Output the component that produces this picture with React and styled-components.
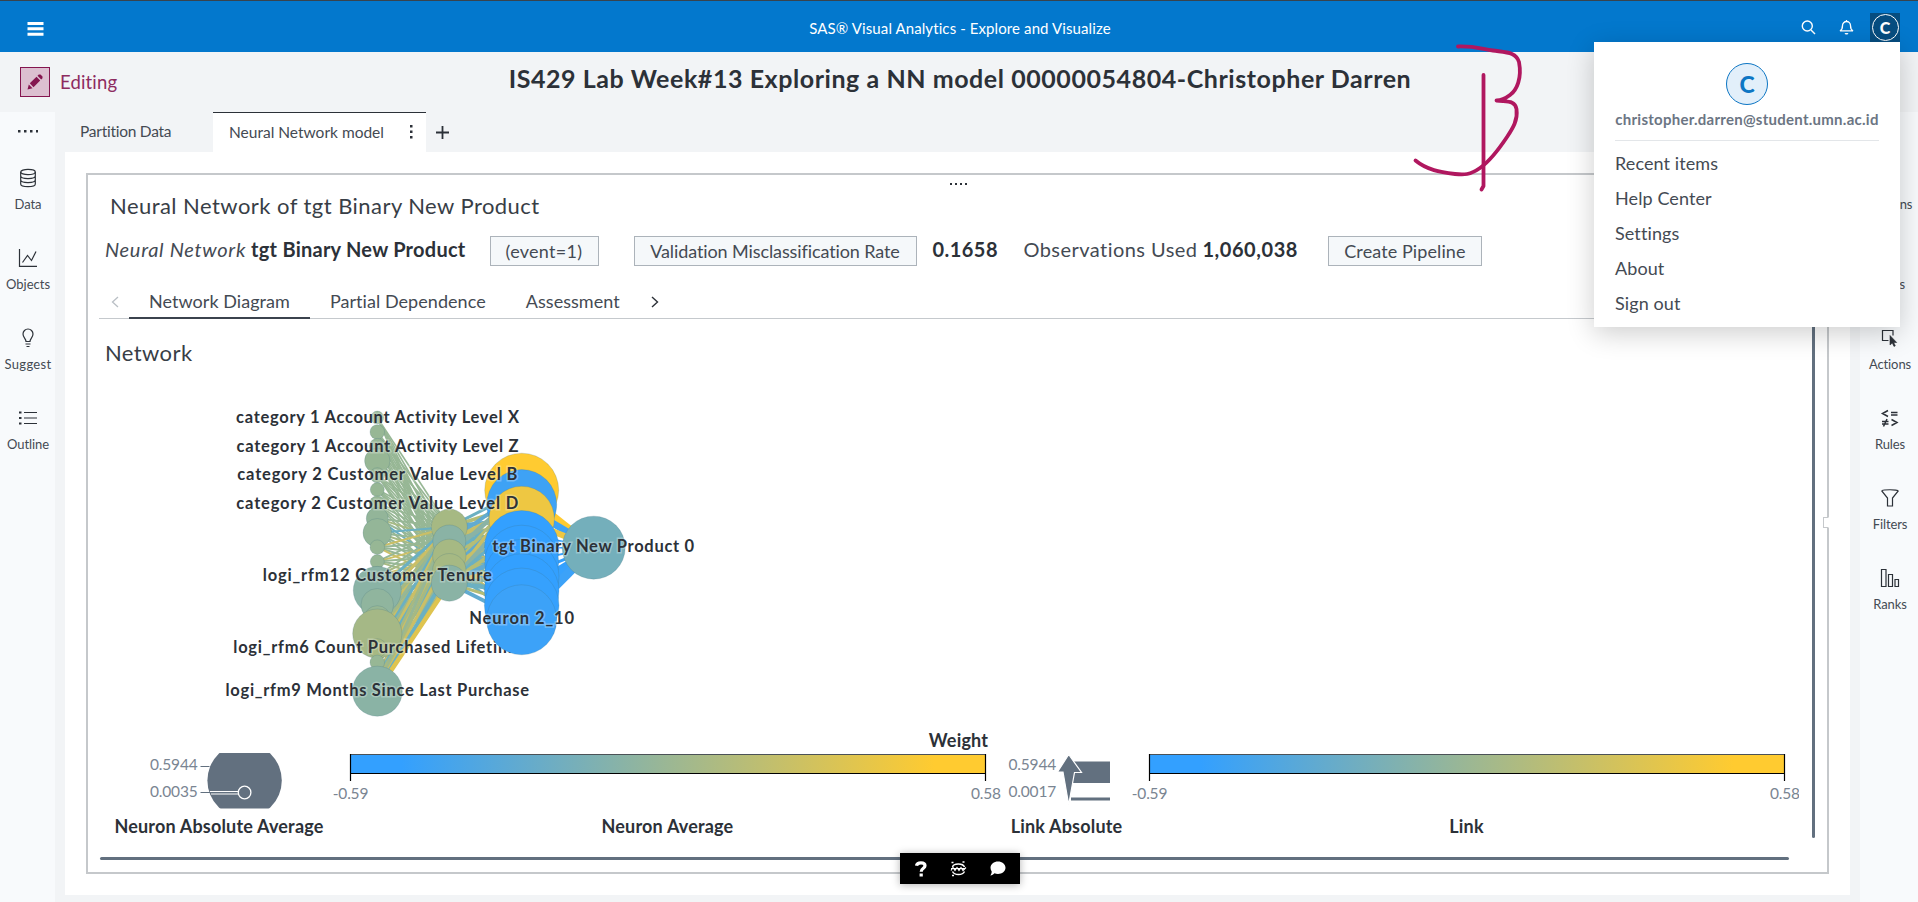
import React from "react";
import styled, { createGlobalStyle } from "styled-components";

const INK = "#2c3138";
const TEXT = "#444a53";
const SLATE = "#62707f";

const GlobalStyle = createGlobalStyle`
  * { box-sizing: border-box; }
  body {
    margin: 0;
    overflow: hidden;
    font-family: Lato, "Open Sans", sans-serif;
    font-variant-ligatures: none;
    color: ${TEXT};
    background: #f2f4f6;
  }
  svg { display: block; }
`;

const Page = styled.div`
  position: relative;
  width: 1918px;
  height: 902px;
  display: flex;
  flex-direction: column;
  overflow: hidden;
  white-space: nowrap;
`;

/* Application bar */
const AppBar = styled.header`
  flex: none;
  height: 52px;
  display: grid;
  grid-template-columns: 1fr auto 1fr;
  align-items: center;
  padding: 4px 18px 0 27px;
  border-top: 1px solid #38434d;
  background: #0378cd;
  color: #fff;
`;
const AppTitle = styled.span`
  margin-right: 7px;
  padding-bottom: 1px;
  font-size: 15px;
  letter-spacing: 0.1px;
`;
const AppActions = styled.div`
  display: flex;
  align-items: center;
  justify-content: flex-end;
`;
const BarIcon = styled.span`
  margin-right: ${(p) => p.$gap}px;
  padding-bottom: 2px;
`;
const AvatarButton = styled.div`
  width: 30px;
  height: 30px;
  padding: 1.5px;
  margin: -2px 0 0 0;
  background: #064d80;
`;
const Avatar = styled.div`
  display: flex;
  align-items: center;
  justify-content: center;
  width: ${(p) => p.$size}px;
  height: ${(p) => p.$size}px;
  border-radius: 50%;
  border: 1.5px solid ${(p) => p.$color};
  background: ${(p) => p.$fill};
  color: ${(p) => p.$color};
  font-weight: 900;
  font-size: ${(p) => p.$font}px;
  line-height: 1;
`;

/* Report header */
const ReportBar = styled.div`
  flex: none;
  height: 60px;
  display: grid;
  grid-template-columns: 1fr auto 1fr;
  padding: 0 18px 0 20px;
`;
const EditMode = styled.div`
  display: flex;
  align-items: center;
  gap: 10px;
  color: #8d2b60;
  font-size: 18.5px;
  letter-spacing: 0.15px;
`;
const EditButton = styled.span`
  display: flex;
  align-items: center;
  justify-content: center;
  width: 30px;
  height: 30px;
  border: 1px solid #84154f;
  background: #dcbfd0;
`;
const ReportTitle = styled.h1`
  margin: 0;
  color: ${INK};
  font-size: 25px;
  font-weight: 700;
  letter-spacing: 0.56px;
  line-height: 53px;
`;

/* Body columns */
const Body = styled.div`
  flex: 1;
  min-height: 0;
  display: flex;
`;
const Rail = styled.nav`
  flex: none;
  width: ${(p) => p.$width}px;
  padding-left: ${(p) => p.$inset || 0}px;
  display: flex;
  flex-direction: column;
  align-items: center;
  background: #f8fafc;
`;
const RailHandle = styled.div`
  height: 42px;
  padding-top: 18px;
`;
const RailItem = styled.div`
  height: 80px;
  display: flex;
  flex-direction: column;
  align-items: center;
  padding-top: 14px;
  font-size: 13px;
  letter-spacing: ${(p) => p.$ls ?? -0.1}px;
  line-height: 16px;
  svg { margin-bottom: 8px; }
`;
const Workspace = styled.main`
  flex: 1;
  min-width: 0;
  display: flex;
  flex-direction: column;
  padding: 0 10px 7px;
`;
const PageTabs = styled.div`
  height: 40px;
  display: flex;
  align-items: center;
  font-size: 15.5px;
`;
const PageTab = styled.span`
  width: 148px;
  padding: 0 0 2px 15px;
  letter-spacing: -0.25px;
`;
const ActivePageTab = styled.span`
  align-self: stretch;
  width: 213px;
  display: flex;
  align-items: center;
  justify-content: space-between;
  padding: 0 13px 1px 16px;
  border-top: 1px solid ${INK};
  background: #fff;
`;
const AddTab = styled.span`
  margin-left: 10px;
`;
const Canvas = styled.section`
  flex: 1;
  min-height: 0;
  padding: 21px 21px 21px;
  background: #fff;
`;
const Frame = styled.div`
  position: relative;
  height: 701px;
  border: 2px solid #c5c8cb;
  display: flex;
  flex-direction: column;
`;
const FrameNotch = styled.span`
  position: absolute;
  right: -2px;
  top: 342px;
  width: 6px;
  height: 11px;
  border: 1px solid #c5c8cb;
  border-right-color: #fff;
  background: #fff;
`;
const DragRow = styled.div`
  height: 17px;
  padding: 1px 0 0 2px;
  display: flex;
  align-items: center;
  justify-content: center;
`;
const ObjectTitle = styled.h2`
  margin: 0;
  padding-left: 22px;
  color: #383e46;
  font-size: 22px;
  font-weight: 400;
  letter-spacing: 0.45px;
  line-height: 28px;
  height: 29px;
`;
const Summary = styled.div`
  height: 60px;
  display: flex;
  align-items: center;
  padding-left: 17px;
  font-size: 20px;
`;
const Stat = styled.span`
  margin: -5px ${(p) => p.$after}px 0 0;
  letter-spacing: ${(p) => p.$ls}px;
  color: ${(p) => (p.$strong ? INK : TEXT)};
  font-weight: ${(p) => (p.$strong ? 700 : 400)};
  font-style: ${(p) => (p.$italic ? "italic" : "normal")};
`;
const Chip = styled.span`
  width: ${(p) => p.$width}px;
  height: 30px;
  margin-right: ${(p) => p.$after}px;
  border: 1px solid #acb3ba;
  background: #f5f8fa;
  font-size: 18px;
  line-height: 28px;
  text-align: center;
  letter-spacing: ${(p) => p.$ls}px;
`;
const ResultTabs = styled.div`
  height: 38px;
  margin-left: 11px;
  display: flex;
  border-bottom: 1px solid #c5c9cd;
  font-size: 18px;
  letter-spacing: 0.05px;
  line-height: 41px;
`;
const ResultTab = styled.span`
  height: 38px;
  padding: 0 20px;
  border-bottom: 2px solid ${(p) => (p.$active ? "#3b434d" : "transparent")};
`;
const TabArrow = styled.span`
  display: flex;
  align-items: center;
  width: 30px;
  padding: 4px 0 0 ${(p) => p.$inset}px;
`;
const Scroller = styled.div`
  flex: none;
  height: 519px;
  display: flex;
  justify-content: space-between;
`;
const Diagram = styled.div`
  padding-left: 11px;
`;
const DiagramTitle = styled.h3`
  margin: 0;
  height: 61px;
  padding-left: 6px;
  color: #383e46;
  font-size: 22px;
  font-weight: 400;
  letter-spacing: 0.4px;
  line-height: 68px;
`;
const VerticalThumb = styled.div`
  width: 3px;
  height: 519px;
  margin-right: 12px;
  border-radius: 2px;
  background: ${SLATE};
`;
const HorizontalThumb = styled.div`
  width: 1689px;
  height: 3px;
  margin: 19px 0 0 12px;
  border-radius: 2px;
  background: ${SLATE};
`;

/* Floating layers */
const UserMenu = styled.aside`
  position: absolute;
  left: 1594px;
  top: 42px;
  width: 306px;
  height: 285px;
  padding: 21px 21px 0;
  background: #fff;
  box-shadow: 0 6px 26px rgba(0, 0, 0, 0.2);
`;
const Profile = styled.div`
  height: 78px;
  margin-bottom: 5px;
  display: flex;
  flex-direction: column;
  align-items: center;
  gap: 4px;
  border-bottom: 1px solid #e3e6e9;
`;
const Email = styled.span`
  color: #6b7583;
  font-size: 15px;
  font-weight: 700;
  letter-spacing: 0.26px;
  line-height: 20px;
`;
const MenuItem = styled.div`
  height: 35px;
  font-size: 18px;
  letter-spacing: 0.1px;
  line-height: 34px;
`;
const HelpBar = styled.div`
  position: absolute;
  left: 900px;
  top: 853px;
  width: 120px;
  height: 31px;
  display: flex;
  align-items: center;
  justify-content: space-around;
  padding: 0 3px;
  background: #000;
  box-shadow: 0 1px 8px rgba(0, 0, 0, 0.3);
`;
const Ink = styled.svg`
  position: absolute;
  left: 1400px;
  top: 36px;
  pointer-events: none;
`;

function Dots({ size = 2, step = 5 }) {
  const w = step * 3 + size;
  return (
    <svg width={w} height={size} fill={INK}>
      {[0, 1, 2, 3].map((i) => (
        <rect key={i} x={i * step} width={size} height={size} />
      ))}
    </svg>
  );
}

const railIcons = {
  data: (
    <>
      <ellipse cx="10" cy="4" rx="7.3" ry="2.7" />
      <path d="M2.7 4v12c0 3.6 14.6 3.6 14.6 0V4M2.7 8c0 3.4 14.6 3.4 14.6 0M2.7 12c0 3.4 14.6 3.4 14.6 0" />
    </>
  ),
  objects: <path d="M1.5 1v17.3H19M4.5 14.5l5-7 4 5 4.5-9" />,
  suggest: <path d="M8 13.5c0-3-3-4-3-7.5a5 5 0 0 1 10 0c0 3.500-3 4.500-3 7.500zM7.500 16h5M8.500 18.500h3" />,
  outline: (
    <>
      <path d="M6 4.500h13M6 10h13M6 15.500h13" />
      <path d="M1 4.500h2.500M1 10h2.500M1 15.500h2.500" strokeWidth="2.200" />
    </>
  ),
  actions: (
    <>
      <path d="M8.500 12.500H2.500V2.500h10.500v5" />
      <path d="M10 7.500v9.500l2.300-2 1.700 3.500 1.300-.7-1.600-3.300h3z" fill={INK} strokeWidth="0.6" />
    </>
  ),
  rules: <path d="M8 2.500L2.500 5.500 8 8.500M11 4.500h6.500M11 7h6.500M2 13.500h6.500M2 16h6.500M7 11l-3.500 7.500M11.500 11.500l5.500 3-5.500 3" strokeWidth="1.500" />,
  filters: <path d="M1.800 3c0-1.700 16.400-1.700 16.400 0L12.500 10v8h-5v-8z" />,
  ranks: <path d="M1.500 1.500h4.500v17H1.500zM8.500 6.500h4v12h-4zM15 11.500h3.500v7H15z" />,
};

function RailEntry({ icon, label, ls }) {
  return (
    <RailItem $ls={ls}>
      <svg width="20" height="20" viewBox="0 0 20 20" fill="none" stroke={INK} strokeWidth="1.2">
        {railIcons[icon]}
      </svg>
      {label}
    </RailItem>
  );
}

/* Network geometry, in page pixels */
const X1 = 377.3;
const X2 = 449.3;
const X3 = 521.7;
const XO = 593.7;
const STEP = 14.4;
const rowY = (i) => 417.6 + i * STEP;

const SAGE = "#97b795";
const TEAL = "#8ab3a5";
const OLIVE = "#a6b983";
const BLUE = "#33a0ff";

const inputs = [
  [6.5, SAGE], [7.3, SAGE], [8, SAGE], [12.7, SAGE], [7.5, SAGE], [7, SAGE], [8, SAGE],
  [11, "#93b599"], [14.3, "#94b698"], [7.3, SAGE], [7, SAGE], [9.5, SAGE], [24, TEAL],
  [16.3, "#90b59e"], [13.5, SAGE], [24.6, "#a5b886"], [9.3, OLIVE], [7.3, SAGE], [6.5, SAGE], [25, TEAL],
].map(([r, fill], i) => ({ x: X1, y: rowY(i), r, fill }));

const hidden = [
  [7.6, 18, OLIVE], [8.6, 16.5, TEAL], [9.6, 16.7, OLIVE], [10.6, 16.7, OLIVE], [11.5, 18, TEAL],
].map(([i, r, fill]) => ({ x: X2, y: rowY(i), r, fill }));

const deep = [
  [37, "#ffcb31"], [35, "#3ea2f5"], [32.7, "#eec742"], [20, BLUE], [37.3, BLUE],
  [37, BLUE], [37.3, BLUE], [37.3, BLUE], [37.3, "#36a1fd"], [35, "#3ca2f8"],
].map(([r, fill], i) => ({ x: X3, y: rowY(i + 5.04), r, fill }));

const output = { x: XO, y: rowY(9.03), r: 31.5, fill: "#74afbb" };

const warm = "#cbbf66";
const cool = "#6bb0c2";
const firstLinks = inputs.flatMap((a, i) =>
  hidden.map((b, j) => {
    const k = (i * 7 + j * 5) % 9;
    const lively = i > 10 || (i > 6 && k < 4);
    return {
      a,
      b,
      w: i > 11 ? 3.2 : i > 6 ? 2 : 1.7,
      stroke: lively ? [cool, warm, OLIVE, SAGE][(i + j * 3) % 4] : SAGE,
    };
  })
);
firstLinks.push({ a: inputs[19], b: hidden[3], w: 4, stroke: cool });
firstLinks.push({ a: inputs[19], b: hidden[4], w: 4.5, stroke: "#dfc44f" });

const secondLinks = hidden.flatMap((a, i) =>
  deep.map((b, j) => ({
    a,
    b,
    w: 3 + ((i + j) % 3) * 0.8,
    stroke: [cool, "#b5bd76", "#62abd0", "#c8bf68", TEAL][(i * 2 + j) % 5],
  }))
);

const outLinks = deep.map((a, i) => ({
  a,
  b: output,
  w: [6, 7, 6, 2, 1.5, 2, 3, 5, 9, 9][i],
  stroke: a.fill,
}));

const Links = ({ items }) =>
  items.map((l, i) => (
    <line key={i} x1={l.a.x} y1={l.a.y} x2={l.b.x} y2={l.b.y} stroke={l.stroke} strokeWidth={l.w} />
  ));

const Nodes = ({ items }) =>
  items.map((n, i) => (
    <circle key={i} cx={n.x} cy={n.y} r={n.r} fill={n.fill} stroke="#3f6f7c" strokeOpacity="0.35" strokeWidth="0.6" />
  ));

const NodeLabel = styled.text`
  font-size: 16.5px;
  font-weight: 700;
  fill: ${INK};
  text-anchor: middle;
  paint-order: stroke;
  stroke: rgba(255, 255, 255, 0.28);
  stroke-width: 3px;
`;
const Caption = styled.text`
  font-size: 18px;
  font-weight: 700;
  fill: ${INK};
  text-anchor: middle;
  letter-spacing: 0.18px;
`;
const Tick = styled.text`
  font-size: 15.5px;
  fill: #7a8592;
  text-anchor: ${(p) => p.$anchor || "middle"};
  letter-spacing: -0.2px;
`;

const nodeLabels = [
  ["category 1 Account Activity Level X", X1 + 0.3, 423, 283],
  ["category 1 Account Activity Level Z", X1 + 0.3, 452, 282],
  ["category 2 Customer Value Level B", X1, 480, 280],
  ["category 2 Customer Value Level D", X1, 509, 282],
  ["logi_rfm12 Customer Tenure", X1, 581, 229],
  ["logi_rfm9 Months Since Last Purchase", X1, 696, 303.5],
  ["Neuron 2_10", X3, 624, 105],
  ["tgt Binary New Product 0", XO - 0.5, 552, 202],
];

function GradientBar({ x, label }) {
  return (
    <g>
      <rect x={x + 0.5} y="754.500" width="635" height="19" fill="url(#weight)" stroke="#4b5257" />
      <path d={`M${x + 0.5} 754v27M${x + 635.5} 754v27M${x} 773.500h636`} stroke="#000" fill="none" strokeWidth="1.2" />
      <Tick x={x + 0.5} y="799">-0.59</Tick>
      <Tick x={x + 636} y="799">0.58</Tick>
      <Caption x={x + 317.500} y="833">{label}</Caption>
    </g>
  );
}

function NetworkChart() {
  return (
    <svg width="1700" height="458" viewBox="99 380 1700 458">
      <defs>
        <linearGradient id="weight">
          <stop offset="0" stopColor="#33a0ff" />
          <stop offset="0.080" stopColor="#33a0ff" />
          <stop offset="0.500" stopColor="#9bb794" />
          <stop offset="0.920" stopColor="#ffcb30" />
          <stop offset="1" stopColor="#ffcb30" />
        </linearGradient>
        <clipPath id="legendClip">
          <rect x="200" y="753" width="90" height="55.500" />
        </clipPath>
      </defs>
      <Links items={firstLinks} />
      <Links items={secondLinks} />
      <Links items={outLinks} />
      <Nodes items={inputs} />
      <Nodes items={hidden} />
      <NodeLabel x={X1} y="653" textLength="288">logi_rfm6 Count Purchased Lifetime</NodeLabel>
      <Nodes items={deep} />
      <Nodes items={[output]} />
      {nodeLabels.map(([text, x, y, w]) => (
        <NodeLabel key={text} x={x} y={y} textLength={w}>{text}</NodeLabel>
      ))}

      <Tick x="197.500" y="770" $anchor="end">0.5944</Tick>
      <Tick x="197.500" y="796.500" $anchor="end">0.0035</Tick>
      <circle cx="244.600" cy="780.500" r="37.200" fill={SLATE} clipPath="url(#legendClip)" />
      <path d="M200.500 766.500h9M200.500 792.500h10" stroke={SLATE} />
      <path d="M210 791.500h28M211 794h27" stroke="#fff" strokeWidth="1.200" />
      <circle cx="244.600" cy="792.500" r="6.300" fill={SLATE} stroke="#fff" strokeWidth="1.300" />
      <Caption x="219" y="832.500">Neuron Absolute Average</Caption>

      <Caption x="958.500" y="747">Weight</Caption>
      <GradientBar x={350} label="Neuron Average" />

      <Tick x="1056" y="770" $anchor="end">0.5944</Tick>
      <Tick x="1056" y="796.500" $anchor="end">0.0017</Tick>
      <path d="M1073 761.500h37v21.500h-37zM1071 797.500h39v3h-39z" fill={SLATE} />
      <path d="M1068.700 754.500L1081.500 772.500H1074.500L1068.700 804.500L1063 772H1057.500z" fill={SLATE} stroke="#fff" strokeWidth="1.200" />
      <Caption x="1066.500" y="832.500">Link Absolute</Caption>
      <GradientBar x={1149} label="Link" />
    </svg>
  );
}

export default function App() {
  return (
    <Page>
      <GlobalStyle />
      <AppBar>
        <svg width="17" height="14" fill="#fff">
          <path d="M0.500 0h16v3h-16zM0.500 5.300h16v3h-16zM0.500 10.700h16v3h-16z" />
        </svg>
        <AppTitle>SAS® Visual Analytics - Explore and Visualize</AppTitle>
        <AppActions>
          <BarIcon $gap={23}>
            <svg width="15" height="15" fill="none" stroke="#fff" strokeWidth="1.400">
              <circle cx="6.300" cy="6" r="5" />
              <path d="M10 10l4 4" />
            </svg>
          </BarIcon>
          <BarIcon $gap={16}>
            <svg width="15" height="15" fill="none" stroke="#fff" strokeWidth="1.300">
              <path d="M1 10.800c2-1 2.500-2.500 2.500-5.300a4 4 0 0 1 8 0c0 2.800.5 4.300 2.500 5.300zM7.500 0v1.500" />
              <path d="M5.500 13h4l-1 1.500h-2z" fill="#fff" stroke="none" />
            </svg>
          </BarIcon>
          <AvatarButton>
            <Avatar $size={27} $font={16} $color="#fff" $fill="transparent">C</Avatar>
          </AvatarButton>
        </AppActions>
      </AppBar>

      <ReportBar>
        <EditMode>
          <EditButton>
            <svg width="16" height="16" fill="#84154f">
              <path d="M0.500 15.500l1.300-5 3.700 3.700zM2.800 9.300L9.500 2.800l3.700 3.700-6.700 6.700zM10.500 1.800l1.300-1.300h1.700l2 2v1.700L14.200 5.500z" />
            </svg>
          </EditButton>
          Editing
        </EditMode>
        <ReportTitle>IS429 Lab Week#13 Exploring a NN model 00000054804-Christopher Darren</ReportTitle>
      </ReportBar>

      <Body>
        <Rail $width={55} $inset={1}>
          <RailHandle>
            <Dots size={2.500} step={6} />
          </RailHandle>
          <RailEntry icon="data" label="Data" />
          <RailEntry icon="objects" label="Objects" ls={0} />
          <RailEntry icon="suggest" label="Suggest" ls={0.300} />
          <RailEntry icon="outline" label="Outline" />
        </Rail>

        <Workspace>
          <PageTabs>
            <PageTab>Partition Data</PageTab>
            <ActivePageTab>
              Neural Network model
              <svg width="3" height="14" fill={INK}>
                <path d="M0 0h2.500v2.500H0zM0 5.500h2.500V8H0zM0 11h2.500v2.500H0z" />
              </svg>
            </ActivePageTab>
            <AddTab>
              <svg width="13" height="13" stroke={INK} strokeWidth="1.800">
                <path d="M6.500 0v13M0 6.500h13" />
              </svg>
            </AddTab>
          </PageTabs>

          <Canvas>
            <Frame>
              <FrameNotch />
              <DragRow>
                <Dots />
              </DragRow>
              <ObjectTitle>Neural Network of tgt Binary New Product</ObjectTitle>
              <Summary>
                <Stat $italic $ls={0.7} $after={5}>Neural Network</Stat>
                <Stat $strong $ls={0.25} $after={24}>tgt Binary New Product</Stat>
                <Chip $width={109} $after={35} $ls={0.3}>(event=1)</Chip>
                <Chip $width={283} $after={16} $ls={-0.1}>Validation Misclassification Rate</Chip>
                <Stat $strong $ls={0.45} $after={25.500}>0.1658</Stat>
                <Stat $ls={0.45} $after={5}>Observations Used</Stat>
                <Stat $strong $ls={0.55} $after={30}>1,060,038</Stat>
                <Chip $width={154} $after={0} $ls={0.1}>Create Pipeline</Chip>
              </Summary>
              <ResultTabs>
                <TabArrow $inset={12}>
                  <svg width="8" height="12" fill="none" stroke="#b9bfc5" strokeWidth="1.300">
                    <path d="M7 1L1.500 6L7 11" />
                  </svg>
                </TabArrow>
                <ResultTab $active>Network Diagram</ResultTab>
                <ResultTab>Partial Dependence</ResultTab>
                <ResultTab>Assessment</ResultTab>
                <TabArrow $inset={11}>
                  <svg width="8" height="12" fill="none" stroke={INK} strokeWidth="1.400">
                    <path d="M1 1L6.500 6L1 11" />
                  </svg>
                </TabArrow>
              </ResultTabs>
              <Scroller>
                <Diagram>
                  <DiagramTitle>Network</DiagramTitle>
                  <NetworkChart />
                </Diagram>
                <VerticalThumb />
              </Scroller>
              <HorizontalThumb />
            </Frame>
          </Canvas>
        </Workspace>

        <Rail $width={58} $inset={2}>
          <RailHandle>
            <Dots size={2.500} step={6} />
          </RailHandle>
          <RailEntry icon="ranks" label="Options" />
          <RailEntry icon="objects" label="Roles" />
          <RailEntry icon="actions" label="Actions" />
          <RailEntry icon="rules" label="Rules" />
          <RailEntry icon="filters" label="Filters" />
          <RailEntry icon="ranks" label="Ranks" />
        </Rail>
      </Body>

      <Ink width="140" height="160" fill="none" stroke="#b0175f" strokeWidth="3.800" strokeLinecap="round" strokeLinejoin="round">
        <path d="M58 10.500C74 10 80 12.500 93 14.500C107 16.500 116 16 119 26C122 42 117 54 110 59C106 62 101 64.500 96.500 64.500C107 66 115 64 116.500 73C118 84 113 92 107 101C99 113 90 125 80 132C70 139 64 139 55 138C40 136 27 134 15.500 124.500" />
        <path d="M83.500 39V150L81.500 153.500" />
      </Ink>

      <UserMenu>
        <Profile>
          <Avatar $size={42} $font={23} $color="#0d76c4" $fill="#e2effa">C</Avatar>
          <Email>christopher.darren@student.umn.ac.id</Email>
        </Profile>
        <MenuItem>Recent items</MenuItem>
        <MenuItem>Help Center</MenuItem>
        <MenuItem>Settings</MenuItem>
        <MenuItem>About</MenuItem>
        <MenuItem>Sign out</MenuItem>
      </UserMenu>

      <HelpBar>
        <svg width="12" height="16" viewBox="0 0 12 16" fill="none" stroke="#fff" strokeWidth="3.200">
          <path d="M1.500 4.800C2 0.800 10 0.800 10 4.800C10 7.500 6.200 7 6.200 10.800M6.200 12.500v3" />
        </svg>
        <svg width="17" height="16" viewBox="0 0 17 16" fill="none" stroke="#fff">
          <path d="M2.500 6C3.500 2 13 2 14.500 6M2.500 10.500C4.500 14.500 12.500 14.500 14.500 10.500" strokeWidth="1.500" />
          <path d="M1 9.500l2-3 2 3 2-3 2 3 2-3 2 3 3-3M1 7.500h14" strokeWidth="1.200" />
          <path d="M1.500 1.500h2M12.500 1h2M2 14.500h2" strokeWidth="1.500" />
        </svg>
        <svg width="16" height="15" viewBox="0 0 16 15" fill="#fff">
          <path d="M8 0.500C12 0.500 15.500 3 15.500 6.800C15.500 10.500 12 13 8 13C6.700 13 5.500 12.800 4.500 12.300C3.500 13.500 2 14.300 0.300 14.500C1.300 13.500 1.700 12 1.700 10.600C1 9.500 0.500 8.200 0.500 6.800C0.500 3 4 0.500 8 0.500z" />
        </svg>
      </HelpBar>
    </Page>
  );
}
